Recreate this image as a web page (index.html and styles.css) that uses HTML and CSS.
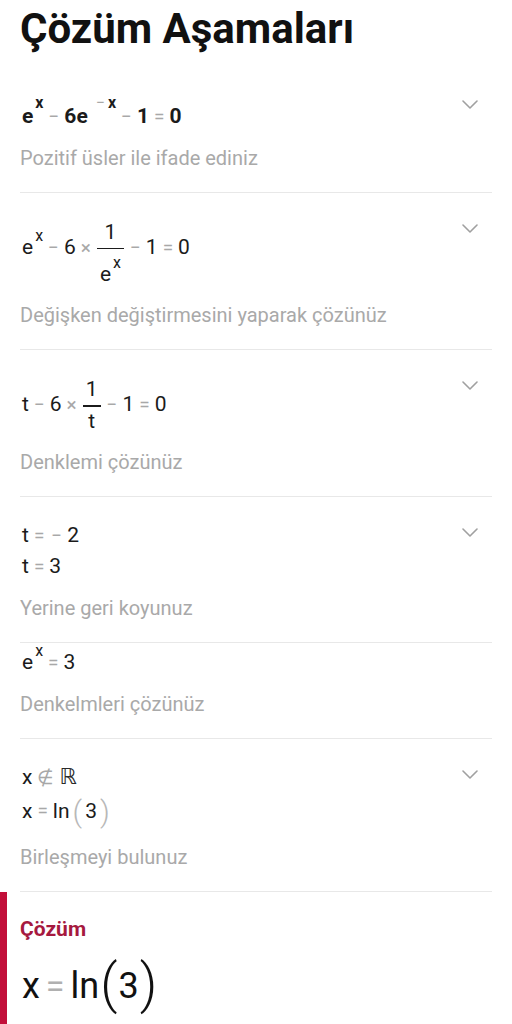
FILE: index.html
```html
<!DOCTYPE html>
<html lang="tr">
<head>
<meta charset="utf-8">
<title>Çözüm Aşamaları</title>
<link rel="stylesheet" href="styles.css">
</head>
<body>
<main class="page">
  <h1 class="title">Çözüm Aşamaları</h1>

  <section class="step">
    <div class="head">
      <div class="math bold">
        <div class="row">e<span class="sup">x</span><span class="op">−</span>6e<span class="sup"><span class="op sm">−</span>x</span><span class="op">−</span>1<span class="op">=</span>0</div>
      </div>
      <svg class="chev chev-up" viewBox="0 0 16 9" width="16" height="9"><path d="M1 1 L8 8 L15 1"/></svg>
    </div>
    <p class="desc">Pozitif üsler ile ifade ediniz</p>
  </section>

  <section class="step">
    <div class="head">
      <div class="math">
        <div class="row">e<span class="sup">x</span><span class="op">−</span>6<span class="op">×</span><span class="frac"><span class="num">1</span><span class="bar"></span><span class="den">e<span class="sup">x</span></span></span><span class="op">−</span>1<span class="op">=</span>0</div>
      </div>
      <svg class="chev" viewBox="0 0 16 9" width="16" height="9"><path d="M1 1 L8 8 L15 1"/></svg>
    </div>
    <p class="desc">Değişken değiştirmesini yaparak çözünüz</p>
  </section>

  <section class="step">
    <div class="head">
      <div class="math">
        <div class="row">t<span class="op">−</span>6<span class="op">×</span><span class="frac"><span class="num">1</span><span class="bar"></span><span class="den">t</span></span><span class="op">−</span>1<span class="op">=</span>0</div>
      </div>
      <svg class="chev" viewBox="0 0 16 9" width="16" height="9"><path d="M1 1 L8 8 L15 1"/></svg>
    </div>
    <p class="desc">Denklemi çözünüz</p>
  </section>

  <section class="step">
    <div class="head">
      <div class="math">
        <div class="row">t<span class="op">=</span><span class="op op-neg">−</span>2</div>
        <div class="row">t<span class="op">=</span>3</div>
      </div>
      <svg class="chev" viewBox="0 0 16 9" width="16" height="9"><path d="M1 1 L8 8 L15 1"/></svg>
    </div>
    <p class="desc">Yerine geri koyunuz</p>
  </section>

  <section class="step step-tight">
    <div class="head">
      <div class="math">
        <div class="row">e<span class="sup">x</span><span class="op">=</span>3</div>
      </div>
    </div>
    <p class="desc">Denkelmleri çözünüz</p>
  </section>

  <section class="step">
    <div class="head">
      <div class="math">
        <div class="row">x<span class="op">∉</span><span class="reals">ℝ</span></div>
        <div class="row">x<span class="op">=</span>ln<span class="paren">(</span>3<span class="paren">)</span></div>
      </div>
      <svg class="chev" viewBox="0 0 16 9" width="16" height="9"><path d="M1 1 L8 8 L15 1"/></svg>
    </div>
    <p class="desc">Birleşmeyi bulunuz</p>
  </section>

  <section class="solution">
    <h2 class="sol-title">Çözüm</h2>
    <div class="answer">x<span class="op">=</span>ln<span class="paren">(</span>3<span class="paren">)</span></div>
  </section>
</main>
</body>
</html>
```

FILE: styles.css
```css
html, body {
  margin: 0;
  padding: 0;
  background: #ffffff;
}

body {
  font-family: Roboto, "Noto Sans", "Liberation Sans", sans-serif;
  color: #1b1b1b;
}

.page {
  width: 512px;
}

.title {
  margin: 5px 20px 23.5px;
  font-size: 42px;
  line-height: 48px;
  font-weight: 700;
  color: #111111;
}

.step {
  margin: 0 20px;
  padding: 26px 0 22px;
  border-bottom: 1px solid #e8e8e8;
}

.step-tight {
  padding-top: 7px;
}

.head {
  display: flex;
  justify-content: space-between;
  align-items: flex-start;
}

.math {
  display: flex;
  flex-direction: column;
  gap: 6px;
  padding-left: 2px;
  font-size: 21px;
  line-height: 24px;
}

.row {
  white-space: nowrap;
}

.bold {
  font-weight: 700;
}

.op {
  color: #a8a8a8;
  font-size: 19px;
  font-weight: 400;
  margin: 0 5px;
}

.op.sm {
  font-size: 16px;
  margin: 0 3px 0 6px;
}

.op-neg {
  margin-left: 2px;
}

.sup {
  font-size: 16px;
  line-height: 0;
  vertical-align: 13px;
  margin-left: 2px;
}

.bold .sup {
  vertical-align: 15px;
}

.frac {
  display: inline-flex;
  flex-direction: column;
  align-items: center;
  vertical-align: 15px;
  margin: 0 1px;
}

.num {
  line-height: 27px;
  padding: 0 3px;
}

.bar {
  align-self: stretch;
  height: 1.5px;
  margin-top: 2px;
  background: #1b1b1b;
}

.den {
  line-height: 24px;
  margin-top: 2px;
  padding: 0 3px;
}

.den .sup {
  line-height: 23px;
}

.reals {
  font-family: "DejaVu Sans", sans-serif;
  font-size: 22px;
  color: #2a2a2a;
}

.paren {
  display: inline-block;
  font-size: 30px;
  font-weight: 300;
  line-height: 32px;
  vertical-align: -4.4px;
  color: #b8b8b8;
  margin: 0 3px;
}

.chev {
  flex: none;
  margin: 5px 14px 0 0;
  fill: none;
  stroke: #a0a0a0;
  stroke-width: 1.6;
  stroke-linecap: round;
  stroke-linejoin: round;
}

.chev-up {
  margin-top: -3px;
}

.desc {
  margin: 17px 0 0;
  font-size: 20px;
  line-height: 24px;
  color: #a9a9a9;
}

.solution {
  border-left: 7px solid #c20f3a;
  padding: 25px 20px 20px 13px;
}

.sol-title {
  margin: 0;
  font-size: 21px;
  line-height: 24px;
  font-weight: 700;
  color: #a6193f;
}

.answer {
  margin-top: 25px;
  padding-left: 2px;
  font-size: 36px;
  line-height: 40px;
  color: #111111;
  white-space: nowrap;
}

.answer .op {
  font-size: 34px;
  margin: 0 6px;
  color: #b0b0b0;
}

.answer .paren {
  font-size: 54px;
  font-weight: 300;
  line-height: 30px;
  vertical-align: -4px;
  color: #111111;
  margin: 0 1px;
}
```
